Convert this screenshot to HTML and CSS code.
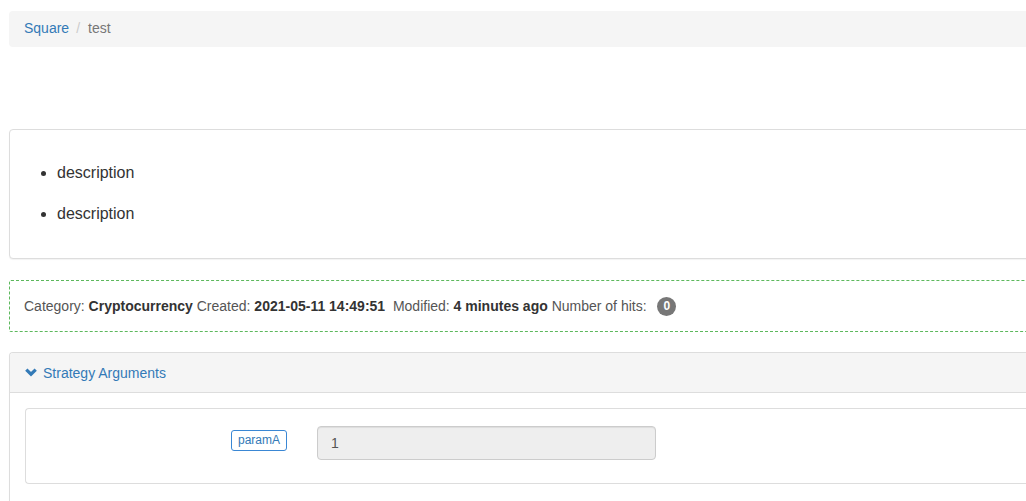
FILE: index.html
```html
<!DOCTYPE html>
<html>
<head>
<meta charset="utf-8">
<link rel="stylesheet" href="styles.css">
</head>
<body>
<div class="page">
  <ol class="breadcrumb">
    <li><a href="#">Square</a></li>
    <li class="active">test</li>
  </ol>

  <div class="spacer"></div>

  <div class="panel desc">
    <ul>
      <li><p>description</p></li>
      <li><p>description</p></li>
    </ul>
  </div>

  <div class="meta">
    Category: <b>Cryptocurrency</b> Created: <b>2021-05-11 14:49:51</b>&nbsp; Modified: <b>4 minutes ago</b> Number of hits: <span class="badge">0</span>
  </div>

  <div class="panel args">
    <div class="panel-heading">
      <a href="#" class="toggle">
        <svg class="chev" viewBox="0 0 12 9" width="12" height="9"><path d="M1.3 1.6 L6 6.2 L10.7 1.6" fill="none" stroke="#337ab7" stroke-width="3.2" stroke-linecap="butt" stroke-linejoin="miter"/></svg>
        Strategy Arguments
      </a>
    </div>
    <div class="panel-body">
      <div class="row-box">
        <div class="label-col"><span class="param">paramA</span></div>
        <div class="input-col"><input class="form-control" value="1" disabled></div>
      </div>
    </div>
  </div>
</div>
</body>
</html>
```

FILE: styles.css
```css
html { overflow: hidden; }
body {
  margin: 0;
  font-family: "Liberation Sans", Arial, Helvetica, sans-serif;
  font-size: 14px;
  line-height: 1.42857;
  color: #333;
  background: #fff;
}
.page {
  width: 1100px;
  height: 501px;
  overflow: hidden;
  padding: 11px 0 0 9px;
  box-sizing: border-box;
}
a { color: #337ab7; text-decoration: none; }

.breadcrumb {
  list-style: none;
  margin: 0;
  padding: 8px 15px;
  height: 36px;
  box-sizing: border-box;
  background: #f5f5f5;
  border-radius: 4px;
  display: flex;
}
.breadcrumb li.active { color: #777; }
.breadcrumb li + li::before {
  content: "/";
  color: #ccc;
  padding: 0 8px 0 7px;
}

.spacer { height: 82px; }

.panel {
  border: 1px solid #ddd;
  border-radius: 4px;
  box-shadow: 0 1px 1px rgba(0,0,0,.05);
  background: #fff;
}
.desc {
  height: 130px;
  box-sizing: border-box;
  padding: 16px 15px 0;
}
.desc ul { margin: 0; padding-left: 32px; }
.desc li { font-size: 16px; }
.desc li p { margin: 12px 0 0; line-height: 29px; }

.meta {
  margin-top: 21px;
  height: 52px;
  box-sizing: border-box;
  border: 1px dashed #5cb85c;
  border-right: none;
  border-radius: 2px;
  padding: 15px 14px 0;
  color: #555;
  font-size: 14px;
  line-height: 20px;
}
.meta b { color: #333; }
.badge {
  display: inline-block;
  min-width: 19px;
  height: 19px;
  box-sizing: border-box;
  padding: 0 6px;
  font-size: 12px;
  font-weight: bold;
  line-height: 19px;
  color: #fff;
  background: #777;
  border-radius: 10px;
  text-align: center;
  vertical-align: 1px;
  margin-left: 7px;
}

.args {
  margin-top: 20px;
  height: 180px;
  border-right: none;
}
.panel-heading {
  background: #f5f5f5;
  border-bottom: 1px solid #ddd;
  height: 40px;
  box-sizing: border-box;
  padding: 10px 15px;
  border-radius: 3px 0 0 0;
}
.toggle { display: inline-flex; align-items: center; gap: 6px; }
.chev { display: block; margin-top: -3px; }
.panel-body { padding: 15px 0 0 15px; }
.row-box {
  border: 1px solid #ddd;
  border-radius: 4px;
  border-right: none;
  height: 76px;
  box-sizing: border-box;
  display: flex;
  align-items: flex-start;
  padding-top: 17px;
}
.label-col {
  width: 291px;
  display: flex;
  justify-content: flex-end;
  padding: 4px 30px 0 0;
  box-sizing: border-box;
}
.param {
  display: inline-block;
  border: 1px solid #3a87d4;
  border-radius: 3px;
  color: #337ab7;
  font-size: 12px;
  line-height: 19px;
  padding: 0 6px;
}
.form-control {
  display: block;
  width: 339px;
  height: 34px;
  box-sizing: border-box;
  padding: 6px 13px;
  font-family: "Liberation Sans", Arial, sans-serif;
  font-size: 14px;
  color: #555;
  background: #eee;
  border: 1px solid #ccc;
  border-radius: 4px;
  box-shadow: inset 0 1px 1px rgba(0,0,0,.075);
  opacity: 1;
  -webkit-text-fill-color: #555;
}
```
